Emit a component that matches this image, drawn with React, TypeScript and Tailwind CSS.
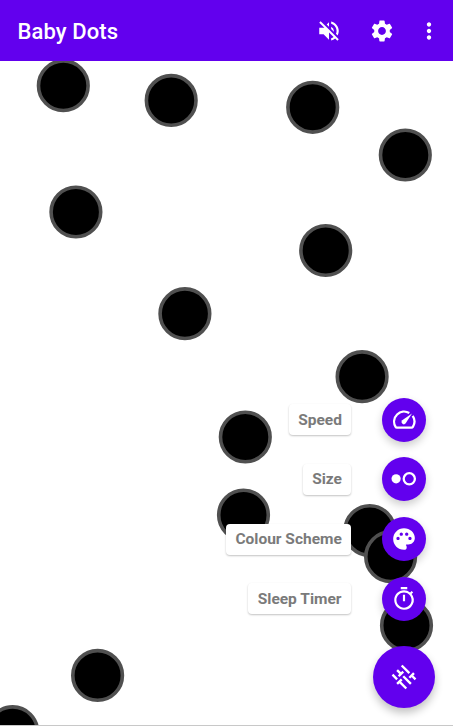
import { MdVolumeOff, MdSettings, MdMoreVert, MdPalette, MdOutlineTimer } from "react-icons/md";

const dots = [
  [63.3, 85.7], [171.2, 100.4], [312.7, 107.3], [405.3, 155], [75.9, 212], [325.7, 250.5],
  [184.9, 313.7], [362.1, 376.7], [245.3, 437], [243.5, 515.1], [369.7, 530.6],
  [390.6, 556.7], [406.5, 625.4], [97.6, 675.4], [12.7, 731.7],
];

function SpeedIcon() {
  return (
    <svg width="26" height="26" viewBox="0 0 26 26" fill="none" stroke="white" strokeWidth="2.3">
      <path d="M18.3 6.1A10 10 0 0 0 4.5 19.7Q5 20.7 6 20.7H20.4Q21.4 20.7 22 19.6A10 10 0 0 0 21.7 8.9" />
      <path d="M21 6.5L11.2 13.3A2.3 2.3 0 0 0 14.5 16.6Z" fill="white" stroke="none" />
    </svg>
  );
}

function SizeIcon() {
  return (
    <svg width="26" height="26" viewBox="0 0 26 26">
      <circle cx="5.1" cy="12.8" r="4.6" fill="white" />
      <circle cx="18.3" cy="12.8" r="5.6" fill="none" stroke="white" strokeWidth="2.3" />
    </svg>
  );
}

function TuneIcon() {
  return (
    <svg width="26" height="26" viewBox="0 0 24 24" fill="none" stroke="white" strokeWidth="2.2" className="rotate-45">
      <path d="M3 6H13M21 6H16M16 3V9M3 12H8M8 9V15M11 12H21M3 18H9M12 15V21M12 18H21" />
    </svg>
  );
}

const actions = [
  { label: "Speed", icon: <SpeedIcon />, width: "w-[62px]" },
  { label: "Size", icon: <SizeIcon />, width: "w-[48px]" },
  { label: "Colour Scheme", icon: <MdPalette size={26} />, width: "w-[125px]" },
  { label: "Sleep Timer", icon: <MdOutlineTimer size={26} />, width: "w-[103px]" },
];

export default function App() {
  return (
    <div className="relative flex h-[726px] w-[453px] flex-col overflow-hidden bg-white font-['Roboto',sans-serif]">
      <svg className="absolute inset-0" width="453" height="726" aria-hidden="true">
        {dots.map(([x, y], i) => (
          <circle key={i} cx={x} cy={y} r="24.8" fill="black" stroke="#505050" strokeWidth="3.6" />
        ))}
      </svg>
      <header className="relative flex h-[61px] shrink-0 items-center bg-[#6200ee] pl-[17.5px] text-white">
        <h1 className="flex-1 pt-0.5 text-[22px] font-medium tracking-[0.1px]">Baby Dots</h1>
        <MdVolumeOff size={26} className="mr-[27px]" />
        <MdSettings size={26} className="mr-[20.5px]" />
        <MdMoreVert size={26} className="mr-[11.5px]" />
      </header>
      <main className="relative flex flex-1 flex-col items-end border-b border-[#c8c8c8] pt-[336.9px]">
        <div className="flex flex-col items-end gap-[15.6px] pr-[27.4px]">
          {actions.map((a) => (
            <div key={a.label} className="flex items-center gap-[30.5px]">
              <span className={`flex h-[31px] items-center justify-center rounded-[4px] bg-white pt-px text-[15.5px] font-bold whitespace-nowrap text-[#7a7a7a] shadow-[0_1px_2px_rgba(0,0,0,0.24)] ${a.width}`}>
                {a.label}
              </span>
              <button aria-label={a.label} className="flex size-[44px] items-center justify-center rounded-full bg-[#6200ee] text-white shadow-[0_4px_8px_rgba(0,0,0,0.2)]">
                {a.icon}
              </button>
            </div>
          ))}
        </div>
        <button aria-label="Options" className="mt-[25.3px] mr-[18.5px] flex size-[62px] items-center justify-center rounded-full bg-[#6200ee] text-white shadow-[0_5px_9px_rgba(0,0,0,0.24)]">
          <TuneIcon />
        </button>
      </main>
    </div>
  );
}
